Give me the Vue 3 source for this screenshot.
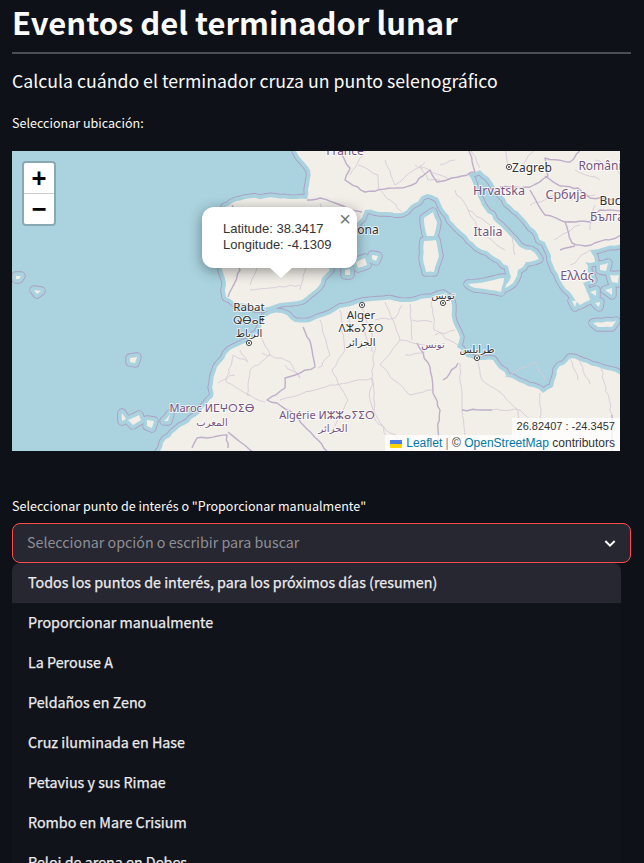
<script setup>
const options = [
  'Todos los puntos de interés, para los próximos días (resumen)',
  'Proporcionar manualmente',
  'La Perouse A',
  'Peldaños en Zeno',
  'Cruz iluminada en Hase',
  'Petavius y sus Rimae',
  'Rombo en Mare Crisium',
  'Reloj de arena en Debes'
]

// Deterministic wobble so that hand-placed outlines read as coastlines and borders.
let seed = 7
function rnd() {
  seed = (seed * 16807) % 2147483647
  return seed / 2147483647 - 0.5
}
function roughen(p, closed, amp) {
  const out = []
  const n = closed ? p.length : p.length - 1
  for (let i = 0; i < n; i++) {
    const a = p[i]
    const b = p[(i + 1) % p.length]
    const len = Math.hypot(b[0] - a[0], b[1] - a[1])
    const steps = Math.max(1, Math.round(len / 5))
    for (let k = 0; k < steps; k++) {
      const t = k / steps
      const w = k === 0 ? 0 : amp
      out.push([a[0] + (b[0] - a[0]) * t + rnd() * w, a[1] + (b[1] - a[1]) * t + rnd() * w])
    }
  }
  if (!closed) out.push(p[p.length - 1])
  return out
}
function trace(src, closed, amp) {
  const raw = src.trim().split(/\s+/).map((s) => s.split(',').map(Number))
  const p = amp ? roughen(raw, closed, amp) : raw
  const f = (n) => n.toFixed(1)
  return 'M' + p.map((c) => `${f(c[0])},${f(c[1])}`).join(' L') + (closed ? ' Z' : '')
}

const europe = '290,120 296,151 302,160 310,170 309,185 307,199 290,199 265,198 245,199 232,203 225,207 226,225 222,250 222,270 226,285 226,297 235,303 248,305 255,308 262,308 280,303 302,300 315,290 322,278 330,270 323,258 335,245 352,230 362,218 365,210 385,212 402,213 413,204 427,194 438,198 450,220 463,233 477,247 496,258 508,266 511,277 505,288 513,283 518,270 526,262 539,259 535,253 520,247 510,236 497,223 482,205 473,183 468,174 480,170 492,182 507,203 527,222 547,247 553,265 563,285 572,295 580,305 590,300 583,283 593,280 585,262 595,262 590,250 605,247 640,240 700,240 700,100'
const africa = '100,520 160,451 163,443 180,427 200,413 213,397 213,383 217,367 230,350 249,342 258,333 264,318 270,314 282,313 295,322 310,322 325,316 340,308 363,302 385,300 410,302 432,298 443,294 450,298 452,310 453,322 460,337 457,347 467,357 480,360 493,360 507,377 533,387 543,393 553,387 557,370 570,358 587,363 607,370 625,375 700,380 700,520'
const islandSrc = [
  '424,218 433,212 437,222 434,236 427,236 425,228',
  '424,241 436,240 439,256 434,272 426,272 423,258',
  '468,284 485,282 504,278 501,292 490,290 475,288',
  '356,262 365,258 367,265 358,268',
  '372,255 378,256 376,261 372,259',
  '345,270 350,269 350,275 345,275',
  '130,358 137,357 135,363 130,362',
  '122,413 126,419 122,421',
  '128,420 139,415 141,420 133,425',
  '147,420 154,421 152,428 147,426',
  '164,421 170,414 168,421',
  '16,276 21,276 19,279 16,279',
  '34,290 41,291 37,294',
  '593,323 616,321 612,327 598,327',
  '572,301 578,300 575,307',
  '595,303 600,302 599,307',
  '600,265 608,263 606,271 600,270',
  '610,275 619,275 618,283 612,282',
  '590,292 596,290 596,296',
  '605,290 612,288 612,295'
]
const nationalSrc = [
  '307,200 320,198 335,203 350,210 362,212',
  '303,327 311,345 315,367 285,378 285,388 267,400 277,403 295,415 318,440 330,455',
  '417,343 430,367 433,393 440,410 438,430 440,455',
  '458,363 443,380',
  '192,448 197,438 227,435 228,448',
  '228,432 257,455',
  '337,148 350,168 345,180 365,192 398,188 412,185 430,170 437,182 462,176 475,172 468,148',
  '500,187 530,187 548,176 545,158 570,162 582,148',
  '530,190 545,215 565,222 572,243 585,246 625,235',
  '545,176 560,186 578,188 590,198 625,200',
  '565,222 590,222 600,210 625,212',
  '560,250 575,246',
  '612,415 612,455',
  '232,205 240,220 230,245 240,270 232,288 228,297',
  '462,410 492,410'
]
const adminSrc = [
  '260,335 270,355 250,370 247,395 265,402',
  '240,350 248,362 233,355 226,382 240,390 250,395',
  '262,353 290,362 300,378 285,365',
  '235,375 218,383',
  '340,310 345,350 332,370 348,400 330,435',
  '362,305 375,345 370,400 395,455',
  '385,302 400,340 380,365 410,395 432,390',
  '400,340 430,345',
  '410,304 412,340',
  '280,400 330,385 372,378',
  '372,378 375,420 418,455',
  '432,300 434,330 458,345',
  '435,335 455,330',
  '460,363 462,410 468,455',
  '478,362 482,380 500,392 518,410 522,455',
  '492,410 520,410 540,430',
  '505,377 535,362',
  '535,362 545,380',
  '540,393 540,430 540,455',
  '570,358 578,380',
  '578,359 590,384',
  '601,368 612,415',
  '253,210 263,250 250,285',
  '320,203 328,240',
  '470,148 480,168',
  '385,160 395,185 425,162',
  '350,175 365,151',
  '380,190 402,212',
  '415,165 450,180',
  '455,190 480,230 505,250',
  '490,225 468,210',
  '515,255 512,235',
  '590,230 595,205',
  '520,170 535,148',
  '570,200 595,195',
  '554,240 580,225',
  '595,160 625,175',
  '505,148 510,170',
  '570,265 590,250',
  '320,320 330,355 318,368',
  '345,330 365,332 372,352',
  '348,312 352,330',
  '375,320 395,318 402,305',
  '412,320 432,322',
  '405,355 425,352',
  '358,165 378,175 378,190',
  '420,165 428,180 440,180',
  '440,165 455,160',
  '530,205 555,195',
  '575,170 600,180',
  '280,215 295,240',
  '240,250 290,265',
  '300,210 310,250 300,290',
  '250,290 300,285'
]
const coastline = [
  trace(europe, true, 2.2),
  trace(africa, true, 2),
  ...islandSrc.map((s) => trace(s, true, 1))
]
const national = nationalSrc.map((s) => trace(s, false, 2))
const admin = adminSrc.map((s) => trace(s, false, 2.4))

const labels = [
  { t: 'France', x: 345, y: 155, c: 'country', s: 12 },
  { t: 'Zagreb', x: 532, y: 172, c: 'city', s: 12 },
  { t: 'Români', x: 600, y: 170, c: 'country', s: 12 },
  { t: 'Hrvatska', x: 499, y: 195, c: 'country', s: 12.5 },
  { t: 'Србија', x: 566, y: 199, c: 'country', s: 12.5 },
  { t: 'Buc', x: 610, y: 205, c: 'city', s: 12 },
  { t: 'Бълга', x: 607, y: 221, c: 'country', s: 12 },
  { t: 'Italia', x: 488, y: 236, c: 'country', s: 12.5 },
  { t: 'ona', x: 368, y: 234, c: 'city', s: 12 },
  { t: 'Ελλάς', x: 577, y: 280, c: 'country', s: 12.5 },
  { t: 'تونس', x: 443, y: 299, c: 'city', s: 10 },
  { t: 'Rabat', x: 249, y: 311, c: 'city', s: 11.5 },
  { t: 'ⵕⴱⴰⵟ', x: 249, y: 324, c: 'city', s: 10.5 },
  { t: 'الرباط', x: 249, y: 337, c: 'city', s: 10 },
  { t: 'Alger', x: 361, y: 319, c: 'city', s: 11.5 },
  { t: 'ⴷⵣⴰⵢⵉⵔ', x: 361, y: 332, c: 'city', s: 10.5 },
  { t: 'الجزائر', x: 361, y: 346, c: 'city', s: 10 },
  { t: 'تونس', x: 433, y: 348, c: 'country', s: 10 },
  { t: 'طرابلس', x: 477, y: 353, c: 'city', s: 10 },
  { t: 'Maroc ⵍⵎⵖⵔⵉⴱ', x: 212, y: 412, c: 'country', s: 11 },
  { t: 'المغرب', x: 212, y: 426, c: 'country', s: 10 },
  { t: 'Algérie ⵍⵣⵣⴰⵢⵉⵔ', x: 327, y: 419, c: 'country', s: 11 },
  { t: 'الجزائر', x: 333, y: 432, c: 'country', s: 10 }
]
const cities = [[509, 167], [249, 343], [362, 305], [443, 303], [477, 358]]
</script>

<template>
  <main class="page">
    <h1 class="title">Eventos del terminador lunar</h1>
    <hr class="rule" />
    <h3 class="subtitle">Calcula cuándo el terminador cruza un punto selenográfico</h3>
    <p class="label map-label">Seleccionar ubicación:</p>

    <div class="map">
      <svg class="map-art" viewBox="12 151 608 300" width="608" height="300" aria-hidden="true">
        <rect x="12" y="151" width="608" height="300" fill="#aad3df" />
        <g fill="#aad3df" stroke="#ab9fc3" stroke-width="9.4" stroke-linejoin="round">
          <path v-for="d in coastline" :key="d" :d="d" />
        </g>
        <g fill="#aad3df" stroke="#aad3df" stroke-width="7.6" stroke-linejoin="round">
          <path v-for="d in coastline" :key="d" :d="d" />
        </g>
        <g fill="#f2efe9">
          <path v-for="d in coastline" :key="d" :d="d" />
        </g>
        <g fill="none" stroke="#d6cbd8" stroke-width=".9" stroke-linejoin="round">
          <path v-for="d in admin" :key="d" :d="d" />
        </g>
        <g fill="none" stroke="#bfaec9" stroke-width="1.4" stroke-linejoin="round">
          <path v-for="d in national" :key="d" :d="d" />
        </g>
        <g v-for="c in cities" :key="c[0]" fill="none" stroke="#333">
          <circle :cx="c[0]" :cy="c[1]" r="2.6" fill="#fff" stroke-width=".9" />
          <circle :cx="c[0]" :cy="c[1]" r=".9" fill="#333" stroke="none" />
        </g>
        <text
          v-for="l in labels"
          :key="l.t + l.x"
          :x="l.x"
          :y="l.y"
          :font-size="l.s"
          :class="['place', l.c]"
          text-anchor="middle"
        >{{ l.t }}</text>
      </svg>

      <div class="zoom">
        <span class="zoom-btn">+</span>
        <span class="zoom-btn">−</span>
      </div>

      <div class="popup">
        <span class="popup-close">×</span>
        <div>Latitude: 38.3417</div>
        <div>Longitude: -4.1309</div>
        <span class="popup-tip"></span>
      </div>

      <div class="attrib">
        <div class="coords">26.82407 : -24.3457</div>
        <div class="credits">
          <svg class="flag" viewBox="0 0 12 8" width="12" height="8" aria-hidden="true">
            <rect width="12" height="4" fill="#4c7be1" />
            <rect y="4" width="12" height="4" fill="#ffd500" />
          </svg>
          <a>Leaflet</a> <span class="sep">|</span> © <a>OpenStreetMap</a> contributors
        </div>
      </div>
    </div>

    <p class="label select-label">Seleccionar punto de interés o "Proporcionar manualmente"</p>
    <div class="select">
      <span class="placeholder">Seleccionar opción o escribir para buscar</span>
      <svg viewBox="0 0 24 24" width="16" height="16" fill="none" stroke="#fafafa" stroke-width="3" aria-hidden="true">
        <path d="M5 9l7 7 7-7" />
      </svg>
    </div>
    <ul class="menu">
      <li v-for="(o, i) in options" :key="o" :class="{ active: i === 0 }">{{ o }}</li>
    </ul>
  </main>
</template>

<style>
html, body { margin: 0; background: #0e1117; overflow: hidden; }
</style>

<style scoped>
.page {
  height: 863px;
  overflow: hidden;
  box-sizing: border-box;
  padding: 0 13px 0 12px;
  background: #0e1117;
  color: #fafafa;
  font-family: "Noto Sans CJK JP", "Noto Sans", sans-serif;
}
.title {
  margin: 0;
  height: 52px;
  font-size: 31px;
  line-height: 43px;
  font-weight: 600;
  white-space: nowrap;
}
.rule {
  margin: 0;
  height: 2px;
  border: 0;
  background: #4b4d53;
}
.subtitle {
  margin: 12px 0 0;
  height: 28px;
  font-size: 17.7px;
  line-height: 28px;
  font-weight: 400;
}
.label {
  margin: 0;
  font-size: 12.56px;
  line-height: 20px;
  color: #fafafa;
}
.map-label { margin-top: 19px; }
.map {
  position: relative;
  width: 608px;
  height: 300px;
  margin-top: 18px;
  overflow: hidden;
  background: #aad3df;
  font-family: "Liberation Sans", Arial, sans-serif;
}
.map-art { display: block; }
.place {
  font-family: "Noto Sans", "DejaVu Sans", sans-serif;
  paint-order: stroke;
  stroke: rgba(255, 255, 255, .7);
  stroke-width: 2px;
}
.city { fill: #333; }
.country { fill: #77557f; }
.zoom {
  position: absolute;
  left: 10px;
  top: 10px;
  display: flex;
  flex-direction: column;
  border: 2px solid rgba(0, 0, 0, .2);
  border-radius: 4px;
  background-clip: padding-box;
}
.zoom-btn {
  width: 30px;
  height: 30px;
  display: flex;
  align-items: center;
  justify-content: center;
  background: #fff;
  color: #000;
  font: bold 24px/30px "DejaVu Sans Mono", monospace;
}
.zoom-btn:first-child { border-bottom: 1px solid #ccc; border-radius: 2px 2px 0 0; }
.zoom-btn:last-child { border-radius: 0 0 2px 2px; }
.popup {
  position: absolute;
  left: 190px;
  top: 56px;
  width: 155px;
  height: 61px;
  box-sizing: border-box;
  padding: 14px 0 0 21px;
  border-radius: 12px;
  background: #fff;
  color: #333;
  font-size: 13px;
  line-height: 16px;
  box-shadow: 0 3px 14px rgba(0, 0, 0, .4);
}
.popup-close {
  position: absolute;
  right: 6px;
  top: 2px;
  font: 20px/20px "Liberation Sans", sans-serif;
  color: #757575;
}
.popup-tip {
  position: absolute;
  left: 68px;
  top: 61px;
  width: 0;
  height: 0;
  border-left: 11px solid transparent;
  border-right: 11px solid transparent;
  border-top: 10px solid #fff;
}
.attrib {
  position: absolute;
  right: 0;
  bottom: 0;
  display: flex;
  flex-direction: column;
  align-items: flex-end;
  font-size: 12px;
  line-height: 16px;
  color: #333;
}
.coords {
  padding: 0 5px;
  height: 17px;
  line-height: 17px;
  font-size: 11px;
  background: rgba(255, 255, 255, .8);
}
.credits {
  padding: 0 5px;
  background: rgba(255, 255, 255, .8);
  white-space: nowrap;
}
.credits a { color: #0078a8; }
.sep { color: #888; }
.flag { margin-right: 4px; vertical-align: -0.5px; }
.select-label { margin-top: 45px; }
.select {
  display: flex;
  align-items: center;
  justify-content: space-between;
  box-sizing: border-box;
  width: 619px;
  height: 40px;
  margin-top: 7px;
  padding: 0 12px 0 14px;
  border: 1px solid #ff4b4b;
  border-radius: 8px;
  background: #262730;
  color: #8e8f96;
  font-size: 14.27px;
}
.placeholder { margin-top: -3px; }
.menu {
  width: 609px;
  margin: 0;
  padding: 0;
  list-style: none;
  background: #10131a;
}
.menu li {
  height: 40px;
  line-height: 38px;
  padding-left: 16px;
  font-size: 14.3px;
  font-weight: 400;
  color: #ececee;
  -webkit-text-stroke: .25px #ececee;
  white-space: nowrap;
}
.menu li.active {
  background: #262730;
  border-radius: 8px 8px 0 0;
}
</style>
